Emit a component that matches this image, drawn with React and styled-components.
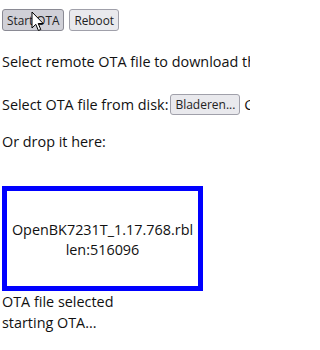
import React from 'react';
import styled, { createGlobalStyle } from 'styled-components';

const GlobalStyle = createGlobalStyle`
  html, body {
    margin: 0;
    background: #fff;
    overflow: hidden;
  }
`;

const Page = styled.div`
  display: flex;
  flex-direction: column;
  align-items: flex-start;
  padding: 9px 0 0 2px;
  width: 250px;
  height: 350px;
  overflow: hidden;
  box-sizing: border-box;
  font-family: 'Open Sans', 'Liberation Sans', sans-serif;
  font-size: 14.4px;
  line-height: 21px;
  color: #111;
  white-space: nowrap;
`;

const Toolbar = styled.div`
  display: flex;
  gap: 5px;
  height: 22px;
`;

const Button = styled.button`
  position: relative;
  height: 22px;
  padding: 0 4px;
  font-family: 'Open Sans', 'Liberation Sans', sans-serif;
  font-size: 11.8px;
  color: #222;
  background: ${(p) => (p.$hover ? '#d0d0d7' : '#e9e9ed')};
  border: 1px solid ${(p) => (p.$hover ? '#8a8a94' : '#a0a0aa')};
  border-radius: 3px;
`;

const FileButton = styled(Button)`
  height: 21px;
  font-size: 12px;
  padding: 0 4px;
  margin-left: 2px;
`;

const Line = styled.div`
  display: flex;
  align-items: center;
  height: ${(p) => p.$h || 21}px;
  margin-top: ${(p) => p.$top}px;
`;

const DropZone = styled.div`
  display: flex;
  flex-direction: column;
  align-items: center;
  justify-content: center;
  width: 201px;
  height: 105px;
  margin-top: 34px;
  box-sizing: border-box;
  border: 5px solid #0000ff;
  line-height: 20px;
  padding-top: 3px;
`;

const Status = styled.div`
  line-height: 21px;
`;

const Cursor = styled.svg`
  position: absolute;
  left: 28px;
  top: 1px;
  pointer-events: none;
`;

const Pointer = () => (
  <Cursor width="14" height="21" viewBox="0 0 14 21">
    <path
      d="M1 1 L1 17 L4.8 13.3 L7.4 19.5 L9.8 18.5 L7.2 12.5 L12.2 12.5 Z"
      fill="#fff"
      stroke="#000"
      strokeWidth="1"
      strokeLinejoin="round"
    />
  </Cursor>
);

export default function App() {
  return (
    <>
      <GlobalStyle />
      <Page>
        <Toolbar>
          <Button $hover>
            Start OTA
            <Pointer />
          </Button>
          <Button>Reboot</Button>
        </Toolbar>
        <Line $top={20}>Select remote OTA file to download the file from</Line>
        <Line $top={21} $h={22}>
          Select OTA file from disk:
          <FileButton>Bladeren...</FileButton>
          &nbsp;Geen bestand geselecteerd.
        </Line>
        <Line $top={16}>Or drop it here:</Line>
        <DropZone>
          <div>OpenBK7231T_1.17.768.rbl</div>
          <div>len:516096</div>
        </DropZone>
        <Status>
          OTA file selected
          <br />
          starting OTA...
        </Status>
      </Page>
    </>
  );
}
